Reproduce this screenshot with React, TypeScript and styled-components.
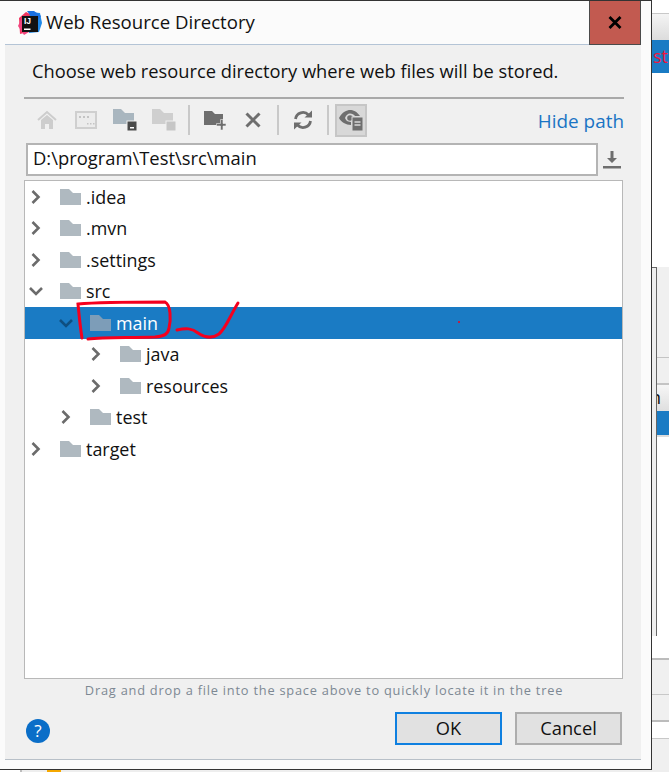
import React from 'react';
import styled, { createGlobalStyle } from 'styled-components';

const GlobalStyle = createGlobalStyle`
  html, body {
    margin: 0;
    padding: 0;
    background: #ffffff;
    overflow: hidden;
  }
  body {
    font-family: "Open Sans", "Noto Sans", sans-serif;
  }
`;

const Desktop = styled.div`
  position: relative;
  width: 669px;
  height: 772px;
  display: grid;
  grid-template-columns: 652px 17px;
  grid-template-rows: 770px 2px;
  overflow: hidden;
`;

/* the dialog itself */
const Dialog = styled.div`
  display: flex;
  flex-direction: column;
  box-sizing: border-box;
  border-top: 1px solid #333;
  border-right: 1px solid #333;
  border-bottom: 1px solid #333;
  background: #fbfbfb;
`;

const TitleBar = styled.div`
  flex: none;
  height: 43px;
  display: flex;
  align-items: center;
  gap: 4px;
  border-bottom: 1px solid #b4c4d6;
  margin: 0 10px 0 5px;
  padding-left: 13px;
`;

const TitleText = styled.span`
  font-size: 18.6px;
  line-height: 40px;
  height: 42px;
  color: #111;
  flex: 1;
`;

const CloseButton = styled.button`
  width: 52px;
  height: 44px;
  box-sizing: border-box;
  margin-bottom: -1px;
  padding: 0;
  border: 1px solid #4a4a4a;
  border-top: none;
  background: #c25a50;
  display: flex;
  align-items: center;
  justify-content: center;
`;

const Panel = styled.div`
  flex: 1;
  margin: 0 10px 9px 5px;
  padding: 0 17px 0 19px;
  background: #f0f0f0;
  border-bottom: 1px solid #b8c0c8;
  display: flex;
  flex-direction: column;
  min-height: 0;
`;

const Prompt = styled.div`
  height: 52px;
  box-sizing: border-box;
  padding: 0 0 2px 8px;
  display: flex;
  align-items: center;
  font-size: 18.3px;
  color: #111;
`;

const Rule = styled.div`
  height: 2px;
  background: #a9a9a9;
`;

const ToolRow = styled.div`
  display: flex;
  align-items: center;
  height: 42px;
  padding-left: 7px;
`;

const ToolButton = styled.div<{ $active?: boolean; $gap?: number }>`
  width: 32px;
  height: 33px;
  margin-right: ${({ $gap }) => $gap ?? 7}px;
  margin-left: ${({ $active }) => ($active ? '-2px' : '0')};
  box-sizing: border-box;
  display: flex;
  align-items: center;
  justify-content: center;
  background: ${({ $active }) => ($active ? '#d8d8d8' : 'transparent')};
  border: ${({ $active }) => ($active ? '2px solid #c6c6c6' : 'none')};
`;

const ToolDivider = styled.div<{ $after?: number }>`
  width: 2px;
  height: 30px;
  background: #c9c9c9;
  margin: 0 ${({ $after }) => $after ?? 8}px 0 1px;
`;

const HidePath = styled.a`
  margin-left: auto;
  margin-top: 2px;
  font-size: 18.9px;
  color: #1a74c4;
`;

const PathRow = styled.div`
  display: flex;
  align-items: center;
  height: 33px;
  margin-left: 2px;
  margin-top: 2px;
`;

const PathInput = styled.div`
  width: 572px;
  height: 33px;
  box-sizing: border-box;
  border: 2px solid #b4b4b4;
  background: #fff;
  padding-left: 5px;
  font-size: 18.4px;
  line-height: 26px;
  color: #111;
`;

const DownloadButton = styled.div`
  margin-left: 4px;
  width: 20px;
  height: 22px;
  display: flex;
`;

const TreeBox = styled.div`
  margin: 4px 1px 0 0;
  height: 499px;
  box-sizing: border-box;
  border: 1px solid #b8b8b8;
  background: #fff;
`;

const Row = styled.div<{ $level: number; $selected?: boolean }>`
  height: 31.5px;
  display: flex;
  align-items: center;
  padding-left: ${({ $level }) => 4 + $level * 30}px;
  background: ${({ $selected }) => ($selected ? '#1a7bc4' : 'transparent')};
  color: ${({ $selected }) => ($selected ? '#fff' : '#111')};
  font-size: 17.9px;
`;

const Chevron = styled.svg`
  width: 14px;
  height: 16px;
  margin-right: 17px;
  flex: none;
`;

const RowLabel = styled.span`
  margin-left: 5px;
`;

const Hint = styled.div`
  text-align: center;
  font-size: 12.8px;
  letter-spacing: 0.78px;
  color: #7d8893;
  margin-top: 1px;
  height: 20px;
  line-height: 20px;
`;

const Footer = styled.div`
  display: flex;
  align-items: center;
  margin-top: 12px;
  padding: 0 2px;
  gap: 13px;
`;

const HelpCircle = styled.div`
  width: 24px;
  height: 24px;
  margin-top: 4px;
  border-radius: 50%;
  background: #0a6ec8;
  color: #fff;
  font-size: 17px;
  line-height: 24px;
  text-align: center;
  margin-right: auto;
`;

const DialogButton = styled.button<{ $primary?: boolean }>`
  width: 107px;
  height: 33px;
  padding: 0 0 2px;
  box-sizing: border-box;
  font-family: inherit;
  font-size: 18.3px;
  color: #111;
  background: #e1e1e1;
  border: 2px solid ${({ $primary }) => ($primary ? '#0f80e0' : '#adadad')};
`;

/* what shows of the window behind the dialog */
const BehindStrip = styled.div`
  display: flex;
  flex-direction: column;
  background: #fff;
  min-width: 0;
`;

const StripBlock = styled.div<{ $h: number; $bg: string; $line?: string; $lineW?: number }>`
  flex: none;
  height: ${({ $h }) => $h}px;
  background: ${({ $bg }) => $bg};
  border-bottom: ${({ $lineW, $line }) => ($line ? `${$lineW ?? 1}px solid ${$line}` : 'none')};
  box-sizing: border-box;
`;

const RedTab = styled.div`
  flex: none;
  height: 33px;
  background: #1a7bc4;
  color: #f0143c;
  font-size: 18px;
  line-height: 32px;
  padding-left: 1px;
  white-space: nowrap;
  overflow: hidden;
`;

const InnerPane = styled.div`
  flex: none;
  height: 369px;
  display: flex;
`;

const PaneEdge = styled.div`
  width: 4px;
  background: #eeeeee;
  border-top: 1px solid #666;
  border-right: 1px solid #666;
`;

const PaneColumn = styled.div`
  flex: 1;
  min-width: 0;
  display: flex;
  flex-direction: column;
`;

const BlueTab = styled.div`
  flex: none;
  height: 24px;
  background: #1a7bc4;
  border-bottom: 2px solid #dcdcdc;
`;

const GradientRow = styled.div`
  flex: none;
  height: 26px;
  background: linear-gradient(#f6f6f6, #dfdfdf);
  border-top: 2px solid #c4c4c4;
  color: #111;
  font-size: 18px;
  line-height: 24px;
  white-space: nowrap;
  overflow: hidden;
  text-indent: -7px;
`;

const BottomStrip = styled.div`
  grid-column: 1 / 3;
  display: flex;
  background: #eeeeee;
`;

const BottomWhite = styled.div`
  width: 20px;
  background: #fff;
  border-right: 2px solid #bdbdbd;
`;

const OrangeMark = styled.div`
  width: 14px;
  margin-left: 25px;
  background: #f5a800;
`;

const Scribble = styled.svg`
  position: absolute;
  left: 0;
  top: 0;
  pointer-events: none;
`;

const Folder = ({ color = '#afb9c0' }: { color?: string }) => (
  <svg width="21" height="16" viewBox="0 0 21 16" style={{ flex: 'none' }}>
    <path d="M0 0h9l4 4h8v12H0z" fill={color} />
  </svg>
);

const ChevronIcon = ({ open, color = '#6b6b6b' }: { open?: boolean; color?: string }) => (
  <Chevron viewBox="0 0 14 16">
    <path
      d={open ? 'M1 5l6 6 6-6' : 'M3.500 2l6 6-6 6'}
      fill="none"
      stroke={color}
      strokeWidth="2.600"
    />
  </Chevron>
);

const IdeaLogo = () => (
  <svg width="24" height="24" viewBox="0 0 24 24" style={{ flex: 'none' }}>
    <path d="M1 7L8 1l6 3-8 18-4 1z" fill="#f0355f" />
    <path d="M0 15l5-11 6 17-5 3z" fill="#f2447e" />
    <path d="M12 1l10 1 2 10-3 9-10 1z" fill="#1e88e8" />
    <path d="M9 0h7l7 5-5 7z" fill="#1a6fe0" />
    <rect x="4" y="5" width="16" height="16" fill="#111" />
    <text x="6" y="13" fontSize="8.500" fontWeight="700" fill="#fff" fontFamily="Liberation Sans, sans-serif">IJ</text>
    <rect x="6" y="17.500" width="6.500" height="1.500" fill="#fff" />
  </svg>
);

const HomeIcon = () => (
  <svg width="20" height="20" viewBox="0 0 20 20">
    <path d="M1 10l9-8 9 8" fill="none" stroke="#cdcdcd" strokeWidth="2" />
    <path d="M4 10l6-5 6 5v9h-4v-5H8v5H4z" fill="#cdcdcd" />
  </svg>
);

const ConsoleIcon = () => (
  <svg width="22" height="18" viewBox="0 0 22 18">
    <rect x="1" y="1" width="20" height="16" fill="#ececec" stroke="#cfcfcf" strokeWidth="2" />
    <g fill="#c4c4c4">
      <rect x="4" y="5" width="2" height="2" />
      <rect x="8" y="5" width="2" height="2" />
      <rect x="12" y="5" width="2" height="2" />
      <rect x="12" y="12" width="1.500" height="1.500" />
      <rect x="15" y="12" width="1.500" height="1.500" />
      <rect x="18" y="12" width="1.500" height="1.500" />
    </g>
  </svg>
);

const FolderMinusIcon = () => (
  <svg width="24" height="22" viewBox="0 0 24 22">
    <path d="M0 0h8l4 4h9v11H0z" fill="#a9b6bf" />
    <rect x="14" y="12" width="10" height="10" fill="#4a4a4a" stroke="#f0f0f0" />
    <rect x="17" y="18" width="4" height="1.500" fill="#fff" />
  </svg>
);

const FolderSquareIcon = () => (
  <svg width="24" height="22" viewBox="0 0 24 22">
    <path d="M0 0h8l4 4h9v11H0z" fill="#cfcfcf" />
    <rect x="14" y="12" width="10" height="10" fill="#c6c6c6" stroke="#f0f0f0" />
  </svg>
);

const FolderPlusIcon = () => (
  <svg width="22" height="20" viewBox="0 0 22 20">
    <path d="M0 1h8l3 3h8v11H0z" fill="#6e6e6e" />
    <path d="M12.500 13.500h4v-4h2.500v4h3v2.500h-3v4h-2.500v-4h-4z" fill="#6e6e6e" stroke="#f0f0f0" strokeWidth="0.600" />
  </svg>
);

const CrossIcon = () => (
  <svg width="16" height="16" viewBox="0 0 16 16">
    <path d="M1.500 1.500l13 13M14.500 1.500l-13 13" stroke="#6e6e6e" strokeWidth="3" />
  </svg>
);

const RefreshIcon = () => (
  <svg width="20" height="20" viewBox="0 0 20 20">
    <path d="M2.500 9a7.500 7.500 0 0 1 13-4" fill="none" stroke="#6e6e6e" strokeWidth="2.800" />
    <path d="M11.500 7.500h7.500v-7z" fill="#6e6e6e" />
    <path d="M17.500 11a7.500 7.500 0 0 1-13 4" fill="none" stroke="#6e6e6e" strokeWidth="2.800" />
    <path d="M8.500 12.500H1v7z" fill="#6e6e6e" />
  </svg>
);

const EyeDocIcon = () => (
  <svg width="24" height="22" viewBox="0 0 24 22">
    <path d="M0 9C3 3 8 1 11 1s7 1.500 10 6h-5c-1-1.500-3-2.500-5-2.500S7 6 6 9c1 2.500 2 3.500 6 4v3C7 16 2 13 0 9z" fill="#6e6e6e" />
    <circle cx="11" cy="9" r="2.800" fill="#6e6e6e" />
    <rect x="13" y="8" width="11" height="14" fill="#6e6e6e" stroke="#d8d8d8" />
    <path d="M15.500 13h6M15.500 16h6" stroke="#d8d8d8" strokeWidth="1.300" />
  </svg>
);

const DownloadIcon = () => (
  <svg width="20" height="22" viewBox="0 0 20 22">
    <path d="M8.500 2h3v7h3.500l-5 5-5-5h3.500z" fill="#6e6e6e" />
    <rect x="1" y="17" width="18" height="2.500" fill="#6e6e6e" />
  </svg>
);

const treeRows = [
  { label: '.idea', level: 0 },
  { label: '.mvn', level: 0 },
  { label: '.settings', level: 0 },
  { label: 'src', level: 0, open: true },
  { label: 'main', level: 1, open: true, selected: true },
  { label: 'java', level: 2 },
  { label: 'resources', level: 2 },
  { label: 'test', level: 1 },
  { label: 'target', level: 0 },
];

const App: React.FC = () => {
  return (
    <Desktop>
      <GlobalStyle />
      <Dialog>
        <TitleBar>
          <IdeaLogo />
          <TitleText>Web Resource Directory</TitleText>
          <CloseButton aria-label="Close">
            <svg width="14" height="13" viewBox="0 0 14 13">
              <path d="M1.500 1l11 11M12.500 1l-11 11" stroke="#000" strokeWidth="2.800" />
            </svg>
          </CloseButton>
        </TitleBar>
        <Panel>
          <Prompt>Choose web resource directory where web files will be stored.</Prompt>
          <Rule />
          <ToolRow>
            <ToolButton><HomeIcon /></ToolButton>
            <ToolButton><ConsoleIcon /></ToolButton>
            <ToolButton><FolderMinusIcon /></ToolButton>
            <ToolButton><FolderSquareIcon /></ToolButton>
            <ToolDivider $after={9} />
            <ToolButton $gap={6}><FolderPlusIcon /></ToolButton>
            <ToolButton><CrossIcon /></ToolButton>
            <ToolDivider />
            <ToolButton><RefreshIcon /></ToolButton>
            <ToolDivider />
            <ToolButton $active $gap={0}><EyeDocIcon /></ToolButton>
            <HidePath>Hide path</HidePath>
          </ToolRow>
          <PathRow>
            <PathInput>D:\program\Test\src\main</PathInput>
            <DownloadButton><DownloadIcon /></DownloadButton>
          </PathRow>
          <TreeBox>
            {treeRows.map((row) => (
              <Row key={row.label} $level={row.level} $selected={row.selected}>
                <ChevronIcon open={row.open} color={row.selected ? '#0f4f80' : '#6b6b6b'} />
                <Folder color={row.selected ? '#7d9db8' : '#afb9c0'} />
                <RowLabel>{row.label}</RowLabel>
              </Row>
            ))}
          </TreeBox>
          <Hint>Drag and drop a file into the space above to quickly locate it in the tree</Hint>
          <Footer>
            <HelpCircle>?</HelpCircle>
            <DialogButton $primary>OK</DialogButton>
            <DialogButton>Cancel</DialogButton>
          </Footer>
        </Panel>
      </Dialog>
      <BehindStrip>
        <StripBlock $h={14} $bg="#ffffff" $line="#c8c8c8" />
        <StripBlock $h={26} $bg="linear-gradient(#f4f4f4, #dcdcdc)" />
        <RedTab>st'</RedTab>
        <StripBlock $h={194} $bg="#ffffff" />
        <InnerPane>
          <PaneEdge />
          <PaneColumn>
            <StripBlock $h={91} $bg="#f0f0f0" $line="#c4c4c4" />
            <StripBlock $h={25} $bg="#f0f0f0" />
            <GradientRow>n</GradientRow>
            <BlueTab />
            <StripBlock $h={201} $bg="#ffffff" />
          </PaneColumn>
        </InnerPane>
        <StripBlock $h={24} $bg="#ffffff" $line="#bcbcbc" $lineW={2} />
        <StripBlock $h={35} $bg="#f0f0f0" $line="#c8c8c8" />
        <StripBlock $h={27} $bg="#f0f0f0" $line="#bcbcbc" $lineW={2} />
        <StripBlock $h={17} $bg="#ffffff" $line="#c8c8c8" />
        <StripBlock $h={31} $bg="#f0f0f0" />
      </BehindStrip>
      <BottomStrip>
        <BottomWhite />
        <OrangeMark />
      </BottomStrip>
      <Scribble width="669" height="772" viewBox="0 0 669 772">
        <path
          d="M82 338C80 326 79 314 78 304C100 302 140 302 165 302C171 305 171 320 169 328C168 334 165 336 155 337C130 338 105 337 88 339"
          fill="none"
          stroke="#f5001e"
          strokeWidth="3"
          strokeLinecap="round"
        />
        <path
          d="M177 330C186 328 192 328 198 333C204 337 212 339 219 334C226 328 230 316 238 303"
          fill="none"
          stroke="#f5001e"
          strokeWidth="3"
          strokeLinecap="round"
        />
        <circle cx="459" cy="322" r="1" fill="#f5001e" />
      </Scribble>
    </Desktop>
  );
};

export default App;
